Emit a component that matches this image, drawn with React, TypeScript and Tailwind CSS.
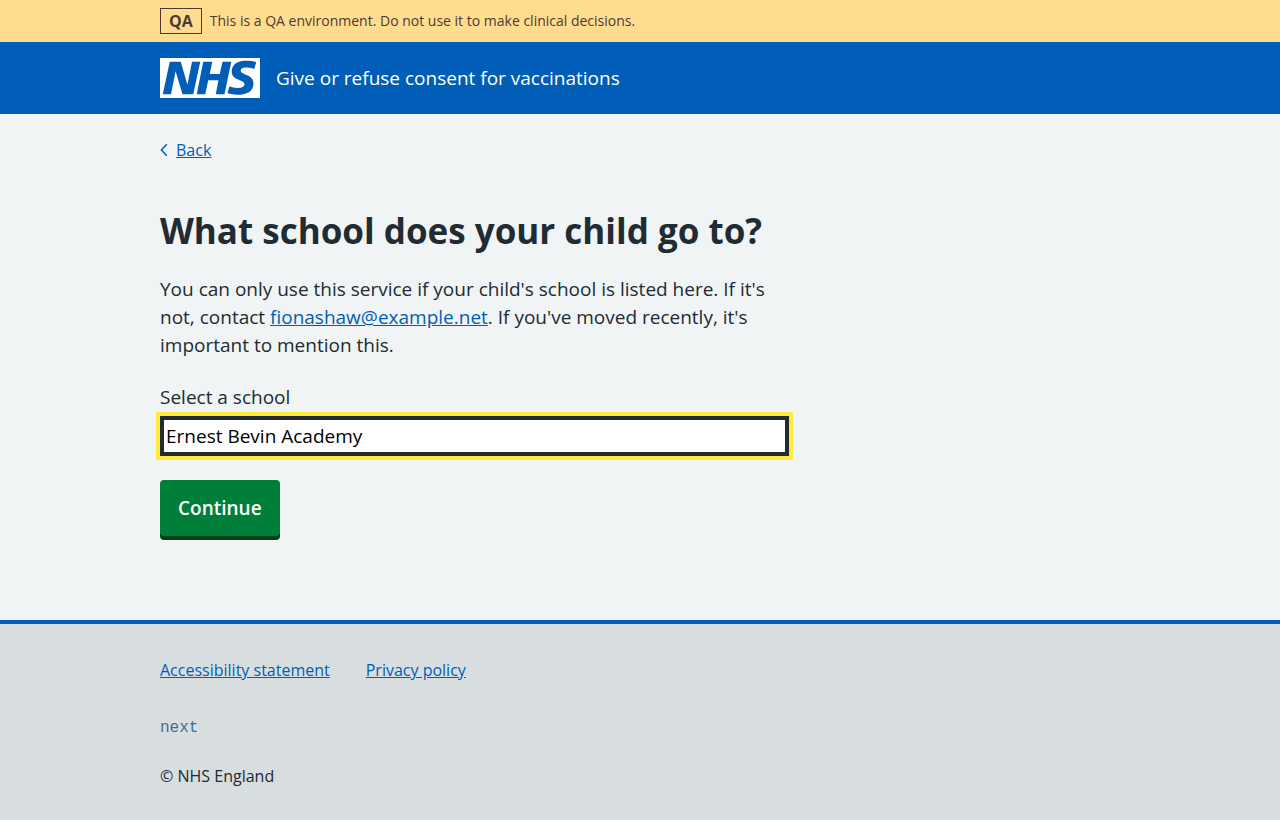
import { useState } from "react";

function Logo() {
  return (
    <svg className="h-10 w-[100px] shrink-0" viewBox="0 0 40 16" role="img" aria-label="NHS">
      <path fill="#fff" d="M0 0h40v16H0z" />
      <path
        fill="#005eb8"
        d="M3.9 1.5h4.4l2.6 9h.1l1.8-9h3.3l-2.8 13H9l-2.7-9h-.1l-1.8 9H1.1M17.3 1.5h3.6l-1 4.9h4L25 1.5h3.5l-2.7 13h-3.5l1.1-5.6h-4.1l-1.2 5.6h-3.4M37.7 4.4c-.7-.3-1.6-.6-2.9-.6-1.4 0-2.5.2-2.5 1.3 0 1.8 5.1 1.2 5.1 5.1 0 3.6-3.3 4.5-6.4 4.5-1.3 0-2.9-.3-4-.7l.8-2.7c.7.4 2.1.7 3.2.7s2.8-.2 2.8-1.5c0-2.1-5.1-1.3-5.1-5 0-3.4 2.9-4.4 5.8-4.4 1.6 0 3.1.2 4 .6"
      />
    </svg>
  );
}

function EnvironmentBanner() {
  return (
    <div className="bg-[#ffdc8e] text-[#4d3b33]">
      <div className="mx-auto flex max-w-[960px] items-center gap-2 py-2 text-sm font-medium">
        <strong className="border border-[#4d3b33] px-2 text-base leading-6 font-bold">QA</strong>
        <span>This is a QA environment. Do not use it to make clinical decisions.</span>
      </div>
    </div>
  );
}

function Header() {
  return (
    <header className="bg-[#005eb8] text-white">
      <div className="mx-auto flex max-w-[960px] items-center gap-4 py-4">
        <Logo />
        <span className="text-[19px] leading-7">Give or refuse consent for vaccinations</span>
      </div>
    </header>
  );
}

export default function App() {
  const [school, setSchool] = useState("Ernest Bevin Academy");
  return (
    <div className="flex min-h-screen flex-col bg-[#d8dde0] font-['Open_Sans','Noto_Sans',sans-serif] text-[#212b32]">
      <EnvironmentBanner />
      <Header />
      <div className="bg-[#f0f4f5]">
        <div className="mx-auto max-w-[960px] pt-6 pb-20">
          <a href="#back" className="flex w-fit items-center gap-2 text-base leading-6 text-[#005eb8]">
            <svg className="h-3 w-2" viewBox="0 0 8 12" fill="none" stroke="currentColor" strokeWidth="1.5" aria-hidden="true">
              <path d="M6.8 .2 1.4 6 6.8 11.8" />
            </svg>
            <span className="underline">Back</span>
          </a>
          <main className="-mx-4 pt-[45px]">
            <form className="w-2/3 px-4" onSubmit={(e) => e.preventDefault()}>
              <h1 className="text-[35px] leading-[48px] font-bold whitespace-nowrap">What school does your child go to?</h1>
              <p className="mt-5 text-[19px] leading-7">
                You can only use this service if your child's school is listed here. If it's not, contact{" "}
                <a href="mailto:fionashaw@example.net" className="text-[#005eb8] underline">
                  fionashaw@example.net
                </a>
                . If you've moved recently, it's important to mention this.
              </p>
              <label htmlFor="school" className="mt-6 block text-[19px] leading-7">
                Select a school
              </label>
              <input
                id="school"
                type="text"
                value={school}
                onChange={(e) => setSchool(e.target.value)}
                className="mt-[5px] block h-10 w-full border-4 border-[#212b32] bg-white px-0.5 text-[19px] text-black outline-4 outline-[#ffeb3b]"
              />
              <button
                type="submit"
                className="mt-6 mb-1 block rounded bg-[#007f3b] px-[18px] py-3.5 text-[19px] leading-7 font-semibold text-white shadow-[0_4px_0_#00401e]"
              >
                Continue
              </button>
            </form>
          </main>
        </div>
      </div>
      <footer className="border-t-4 border-[#005eb8]">
        <div className="mx-auto max-w-[960px] pt-8 pb-[30px] text-base leading-7">
          <nav className="flex gap-9 text-[#005eb8]">
            <a href="#accessibility" className="underline">Accessibility statement</a>
            <a href="#privacy" className="underline">Privacy policy</a>
          </nav>
          <p className="mt-[30px] font-['Liberation_Mono',monospace] text-[#41708f]">next</p>
          <p className="mt-5">© NHS England</p>
        </div>
      </footer>
    </div>
  );
}
